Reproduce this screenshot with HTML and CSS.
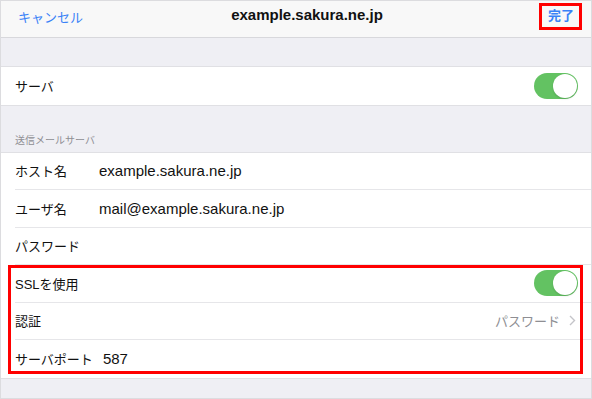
FILE: index.html
```html
<!DOCTYPE html>
<html lang="ja">

<head>
    <meta name="viewport" content="width=device-width, initial-scale=1.0" />
    <title>example.sakura.ne.jp</title>
    <link rel="stylesheet" href="styles.css">
</head>

<body>
    <div class="screen">
        <div class="navbar">
            <span class="cancel">キャンセル</span>
            <span class="title">example.sakura.ne.jp</span>
            <span class="done">完了</span>
        </div>

        <div class="spacer"></div>

        <div class="group">
            <div class="row">
                <span class="label">サーバ</span>
                <span class="toggle"><span class="knob"></span></span>
            </div>
        </div>

        <div class="section-title">送信メールサーバ</div>

        <div class="group">
            <div class="row">
                <span class="label fixed">ホスト名</span>
                <span class="value">example.sakura.ne.jp</span>
            </div>
            <div class="row">
                <span class="label fixed">ユーザ名</span>
                <span class="value">mail@example.sakura.ne.jp</span>
            </div>
            <div class="row">
                <span class="label fixed">パスワード</span>
            </div>
            <div class="highlight">
                <div class="row">
                    <span class="label">SSLを使用</span>
                    <span class="toggle"><span class="knob"></span></span>
                </div>
                <div class="row">
                    <span class="label">認証</span>
                    <span class="detail">パスワード
                        <svg class="chevron" width="7" height="11" viewBox="0 0 7 11">
                            <path d="M1 1 L5.5 5.5 L1 10" fill="none" stroke="#c4c4c9" stroke-width="1.4" />
                        </svg>
                    </span>
                </div>
                <div class="row last">
                    <span class="label fixed">サーバポート</span>
                    <span class="value">587</span>
                </div>
                <div class="mark"></div>
            </div>
        </div>
    </div>
</body>

</html>
```

FILE: styles.css
```css
* {
    padding: 0;
    margin: 0;
    box-sizing: border-box;
    font-family: "Liberation Sans", "Noto Sans CJK JP", sans-serif;
}

body {
    background-color: #ffffff;
}

.screen {
    width: 592px;
    height: 399px;
    border: 1px solid #dcdcdf;
    background-color: #efeff4;
    overflow: hidden;
}

.navbar {
    height: 37px;
    background-color: #f8f8f8;
    border-bottom: 1px solid #d8d8dc;
    display: flex;
    align-items: center;
    justify-content: space-between;
    padding: 0 9px 6px 17px;
    position: relative;
}

.cancel {
    color: #3a82f7;
    font-size: 13px;
}

.title {
    position: absolute;
    left: 22px;
    right: 0;
    top: 5px;
    text-align: center;
    font-size: 15px;
    font-weight: bold;
    color: #111111;
    pointer-events: none;
}

.done {
    color: #3a82f7;
    font-size: 13px;
    font-weight: bold;
    border: 3px solid #ff0000;
    padding: 2px 5px 3px 6px;
    line-height: 16px;
}

.spacer {
    height: 28px;
}

.group {
    background-color: #ffffff;
    border-top: 1px solid #e0e0e4;
    border-bottom: 1px solid #e0e0e4;
    padding-left: 14px;
}

.row {
    height: 37.5px;
    display: flex;
    align-items: center;
    padding-right: 13px;
    border-bottom: 1px solid #e6e6e9;
    font-size: 13px;
    color: #111111;
}

.group > .row:last-child,
.row.last {
    border-bottom: none;
}

.label {
    white-space: nowrap;
}

.label.fixed {
    min-width: 74px;
    margin-right: 10px;
}

.value {
    font-size: 15px;
}

.toggle {
    margin-left: auto;
    width: 44px;
    height: 26px;
    border-radius: 13px;
    background-color: #63c262;
    display: flex;
    align-items: center;
    justify-content: flex-end;
    padding-right: 1px;
}

.knob {
    width: 24px;
    height: 24px;
    border-radius: 50%;
    background-color: #ffffff;
    box-shadow: 0 1px 2px rgba(0, 0, 0, 0.15);
}

.section-title {
    height: 46px;
    display: flex;
    align-items: flex-end;
    padding: 0 0 5px 14px;
    font-size: 10px;
    color: #8e8e93;
}

.detail {
    margin-left: auto;
    color: #8e8e93;
    display: flex;
    align-items: center;
    gap: 9px;
    margin-right: 2px;
}

.highlight {
    position: relative;
}

.mark {
    position: absolute;
    left: -7px;
    right: 8px;
    top: 0;
    bottom: 4px;
    border: 3px solid #ff0000;
}
```
